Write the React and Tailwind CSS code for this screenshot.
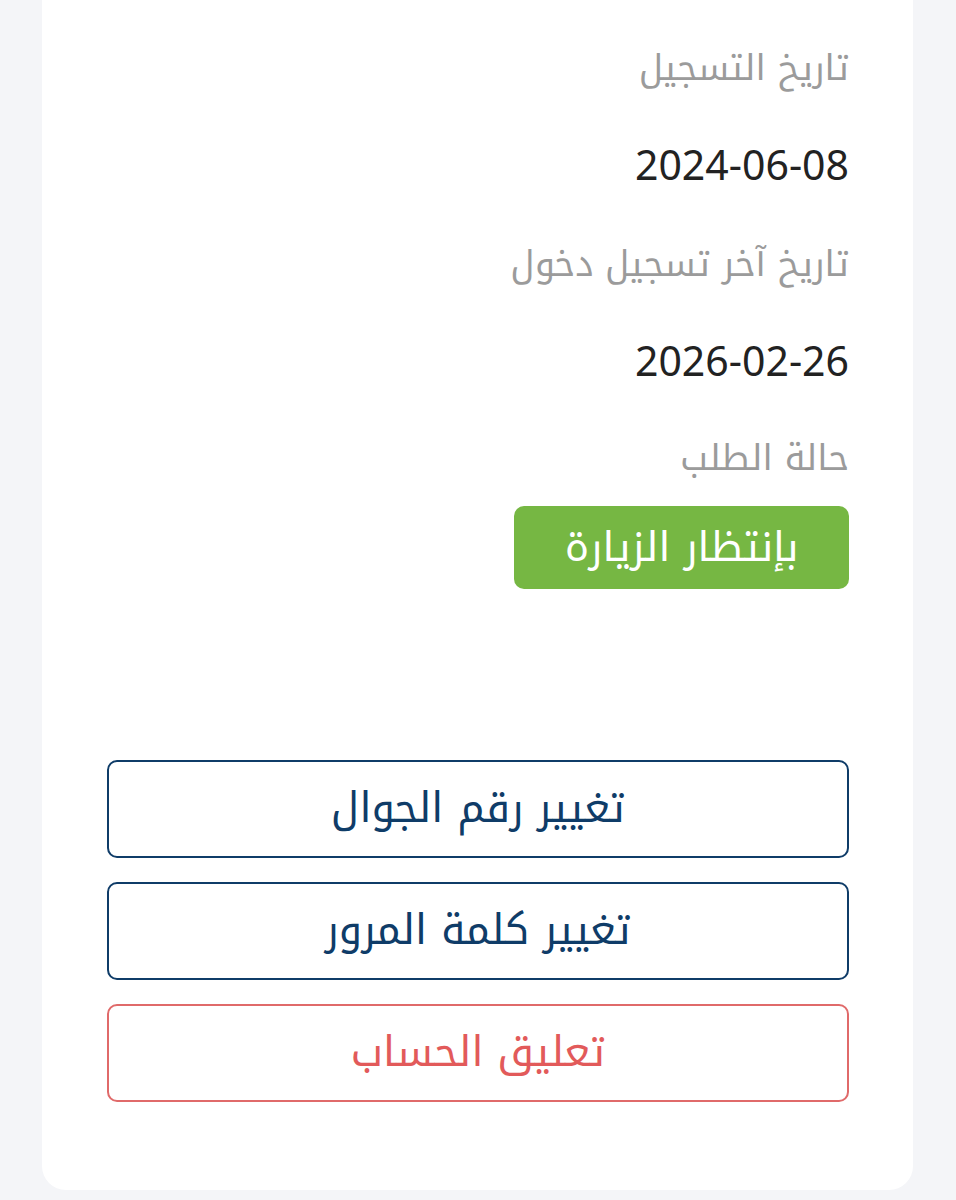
export default function App() {
  const font = { fontFamily: '"Noto Kufi Arabic", "Noto Sans", "Noto Sans Arabic", "DejaVu Sans", sans-serif' };
  return (
    <div dir="rtl" className="w-[956px] h-[1200px] bg-[#f4f5f8] pl-[42px] pr-[43px]" style={font}>
      <div className="bg-white rounded-b-[24px] h-[1190px] pr-[64px] pl-[65px] pt-[19px] flex flex-col">
        <div className="h-[98px] leading-[98px] text-[35.5px] text-[#9b9b9b]">تاريخ التسجيل</div>
        <div className="h-[98px] leading-[98px] text-[41px] text-[#222222]">2024-06-08</div>
        <div className="h-[98px] leading-[98px] text-[35.5px] text-[#9b9b9b]">تاريخ آخر تسجيل دخول</div>
        <div className="h-[98px] leading-[98px] text-[41px] text-[#222222]">2026-02-26</div>
        <div className="h-[95px] leading-[95px] text-[35.5px] text-[#9b9b9b]">حالة الطلب</div>
        <div className="flex">
          <div className="w-[335px] h-[83px] rounded-[10px] bg-[#76b743] text-white text-[41px] flex items-center justify-center">
            بإنتظار الزيارة
          </div>
        </div>
        <div className="mt-[171px] flex flex-col gap-[24px]">
          <button className="h-[98px] w-full rounded-[10px] border-2 border-[#0f3c68] text-[#0f3c68] text-[41.5px] flex items-center justify-center">
            تغيير رقم الجوال
          </button>
          <button className="h-[98px] w-full rounded-[10px] border-2 border-[#0f3c68] text-[#0f3c68] text-[41.5px] flex items-center justify-center">
            تغيير كلمة المرور
          </button>
          <button className="h-[98px] w-full rounded-[10px] border-2 border-[#e06a6a] text-[#e25a5a] text-[41.5px] flex items-center justify-center">
            تعليق الحساب
          </button>
        </div>
      </div>
    </div>
  );
}
